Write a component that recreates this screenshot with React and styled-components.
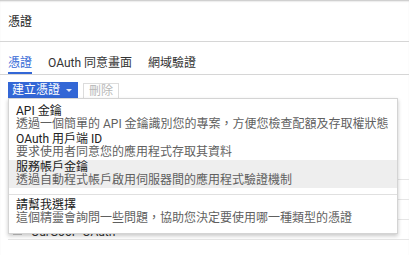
import React from 'react';
import styled, { createGlobalStyle } from 'styled-components';

const GlobalStyle = createGlobalStyle`
  body {
    margin: 0;
    background: #fff;
    color: #212121;
    font-family: Roboto, "Noto Sans CJK TC", sans-serif;
    font-size: 12px;
  }
`;

const Page = styled.div`
  width: 409px;
  height: 255px;
  overflow: hidden;
  box-shadow: inset 0 2px 2px -1px rgba(0, 0, 0, 0.25);
`;

const Header = styled.header`
  height: 41px;
  display: flex;
  align-items: center;
  padding: 0 8px;
  border-bottom: 1px solid #d6d6d6;
  font-size: 12px;
  color: #212121;
`;

const TabBar = styled.nav`
  height: 32px;
  display: flex;
  align-items: flex-end;
  gap: 16px;
  padding: 0 8px;
  border-bottom: 1px solid #d6d6d6;
`;

const Tab = styled.div`
  height: 14px;
  line-height: 14px;
  padding-bottom: 2px;
  border-bottom: 2px solid ${(p) => (p.$active ? '#3367d6' : 'transparent')};
  color: ${(p) => (p.$active ? '#3367d6' : '#333')};
`;

const Toolbar = styled.div`
  display: flex;
  align-items: flex-start;
  gap: 5px;
  padding: 7px 8px 0;
  height: 16px;
`;

const MenuAnchor = styled.div`
  position: relative;
`;

const PrimaryButton = styled.button`
  display: flex;
  align-items: center;
  height: 16px;
  padding: 0 6px 0 4px;
  border: none;
  background: #3367d6;
  color: #fff;
  font: inherit;
  line-height: 16px;
  gap: 6px;
`;

const Caret = styled.span`
  width: 0;
  height: 0;
  border-left: 3px solid transparent;
  border-right: 3px solid transparent;
  border-top: 3px solid #fff;
  margin-top: 1px;
  opacity: 0.85;
`;

const GhostButton = styled.button`
  height: 16px;
  margin-top: 1px;
  padding: 0 5px;
  border: 1px solid #dcdcdc;
  background: #fff;
  color: #b8b8b8;
  font: inherit;
  line-height: 13px;
`;

const Menu = styled.div`
  position: absolute;
  top: 16px;
  left: 0;
  width: 388px;
  background: #fff;
  border: 1px solid #d4d4d4;
  box-shadow: 0 2px 4px rgba(0, 0, 0, 0.22);
  padding: 5px 0 8px;
  z-index: 2;
`;

const MenuItem = styled.div`
  padding: ${(p) => (p.$last ? '4px 7px 0' : '1px 7px 1px')};
  background: ${(p) => (p.$hover ? '#eeeeee' : 'transparent')};
`;

const ItemTitle = styled.div`
  height: 13px;
  line-height: 13px;
  color: #212121;
  white-space: nowrap;
`;

const ItemDesc = styled.div`
  height: 13px;
  line-height: 13px;
  color: #5f5f5f;
  white-space: nowrap;
`;

const Divider = styled.div`
  height: 1px;
  background: #e0e0e0;
  margin-top: 6px;
`;

const Table = styled.div`
  margin: 62px 0 0 8px;
`;

const Row = styled.div`
  height: 19px;
  display: flex;
  align-items: flex-end;
  gap: 9px;
  padding-left: 5px;
  border-bottom: 1px solid #e6e6e6;
  color: #333;
  line-height: 14px;
`;

const Checkbox = styled.span`
  width: 7px;
  height: 6px;
  margin-bottom: 4px;
  border: 1px solid #c8c8c8;
`;

const items = [
  { title: 'API 金鑰', desc: '透過一個簡單的 API 金鑰識別您的專案，方便您檢查配額及存取權狀態' },
  { title: 'OAuth 用戶端 ID', desc: '要求使用者同意您的應用程式存取其資料' },
  { title: '服務帳戶金鑰', desc: '透過自動程式帳戶啟用伺服器間的應用程式驗證機制', hover: true },
];

const App = () => {
  return (
    <>
      <GlobalStyle />
      <Page>
        <Header>憑證</Header>
        <TabBar>
          <Tab $active>憑證</Tab>
          <Tab>OAuth 同意畫面</Tab>
          <Tab>網域驗證</Tab>
        </TabBar>
        <Toolbar>
          <MenuAnchor>
            <PrimaryButton>
              建立憑證
              <Caret />
            </PrimaryButton>
            <Menu>
              {items.map((it) => (
                <MenuItem key={it.title} $hover={it.hover}>
                  <ItemTitle>{it.title}</ItemTitle>
                  <ItemDesc>{it.desc}</ItemDesc>
                </MenuItem>
              ))}
              <Divider />
              <MenuItem $last>
                <ItemTitle>請幫我選擇</ItemTitle>
                <ItemDesc>這個精靈會詢問一些問題，協助您決定要使用哪一種類型的憑證</ItemDesc>
              </MenuItem>
            </Menu>
          </MenuAnchor>
          <GhostButton disabled>刪除</GhostButton>
        </Toolbar>
        <Table>
          <Row />
          <Row />
          <Row />
          <Row>
            <Checkbox />
            OurGooP OAuth
          </Row>
        </Table>
      </Page>
    </>
  );
};

export default App;
